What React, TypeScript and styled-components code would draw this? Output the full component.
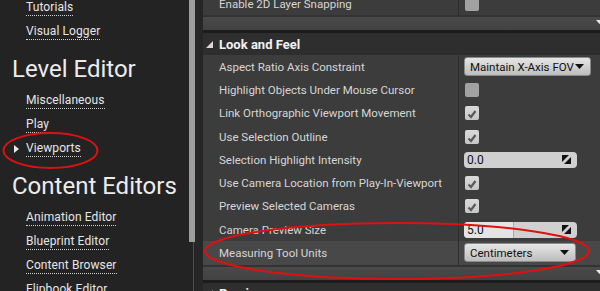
import React from 'react';
import styled, {createGlobalStyle} from 'styled-components';

const GlobalStyle = createGlobalStyle`
    html, body {
        margin: 0;
        padding: 0;
        background: #232323;
    }
    body {
        font-family: Roboto, "Liberation Sans", sans-serif;
    }
`

const navGroups = [
    {title: null, links: ['Tutorials', 'Visual Logger']},
    {title: 'Level Editor', links: ['Miscellaneous', 'Play', 'Viewports']},
    {title: 'Content Editors', links: ['Animation Editor', 'Blueprint Editor', 'Content Browser', 'Flipbook Editor']},
];

type Value =
    | {kind: 'combo'; text: string; width: number}
    | {kind: 'check'; on: boolean}
    | {kind: 'number'; text: string; fill?: number};

const lookAndFeel: {label: string; value: Value; hover?: boolean}[] = [
    {label: 'Aspect Ratio Axis Constraint', value: {kind: 'combo', text: 'Maintain X-Axis FOV', width: 127}},
    {label: 'Highlight Objects Under Mouse Cursor', value: {kind: 'check', on: false}},
    {label: 'Link Orthographic Viewport Movement', value: {kind: 'check', on: true}},
    {label: 'Use Selection Outline', value: {kind: 'check', on: true}},
    {label: 'Selection Highlight Intensity', value: {kind: 'number', text: '0.0'}},
    {label: 'Use Camera Location from Play-In-Viewport', value: {kind: 'check', on: true}},
    {label: 'Preview Selected Cameras', value: {kind: 'check', on: true}},
    {label: 'Camera Preview Size', value: {kind: 'number', text: '5.0', fill: 49}},
    {label: 'Measuring Tool Units', value: {kind: 'combo', text: 'Centimeters', width: 112}, hover: true},
];

const ValueWidget = ({value}: {value: Value}) => {
    if (value.kind === 'check') {
        return (
            <CheckBox $on={value.on}>
                {value.on && (
                    <svg width="14" height="14" viewBox="0 0 14 14">
                        <polyline points="3.5,7.5 6,10 10.5,4" fill="none" stroke="#5a5a5a" strokeWidth="2.2"/>
                    </svg>
                )}
            </CheckBox>
        );
    }
    if (value.kind === 'number') {
        return (
            <NumberBox>
                {value.fill && <SliderFill style={{width: value.fill}}/>}
                <NumberText>{value.text}</NumberText>
                <svg width="9" height="9" viewBox="0 0 9 9">
                    <polygon points="0,0 7,0 0,7" fill="#111"/>
                    <polygon points="9,2 9,9 2,9" fill="#111"/>
                </svg>
            </NumberBox>
        );
    }
    return (
        <Combo style={{width: value.width}}>
            <span>{value.text}</span>
            <svg width="9" height="5" viewBox="0 0 9 5">
                <polygon points="0,0 9,0 4.5,5" fill="#111"/>
            </svg>
        </Combo>
    );
};

const Expander = () => (
    <Band>
        <svg width="7" height="5" viewBox="0 0 7 5">
            <polygon points="0,0 7,0 3.5,4" fill="#e8e8e8"/>
        </svg>
    </Band>
);

export default function App() {
    return (
        <Screen>
            <GlobalStyle/>
            <Sidebar>
                {navGroups.map((group, gi) => (
                    <React.Fragment key={gi}>
                        {group.title && <GroupTitle>{group.title}</GroupTitle>}
                        {group.links.map((link) => (
                            <NavItem key={link}>
                                <Marker>{link === 'Viewports' && <Caret/>}</Marker>
                                <NavLink>{link}</NavLink>
                            </NavItem>
                        ))}
                    </React.Fragment>
                ))}
            </Sidebar>
            <ScrollTrack>
                <ScrollThumb/>
                <ScrollRail/>
            </ScrollTrack>
            <Gutter/>
            <Details>
                <PropertyRow>
                    <PropName>Enable 2D Layer Snapping</PropName>
                    <PropValue><CheckBox $on={false}/></PropValue>
                </PropertyRow>
                <Separator/>
                <Expander/>
                <DarkLine/>
                <CategoryHeader>
                    <svg width="7" height="7" viewBox="0 0 7 7">
                        <polygon points="7,0 7,7 0,7" fill="#d8d8d8"/>
                    </svg>
                    Look and Feel
                </CategoryHeader>
                {lookAndFeel.map((row) => (
                    <PropertyRow key={row.label} $hover={row.hover}>
                        <PropName>{row.label}</PropName>
                        <PropValue><ValueWidget value={row.value}/></PropValue>
                    </PropertyRow>
                ))}
                <Separator/>
                <Expander/>
                <DarkLine/>
                <CategoryHeader>
                    <svg width="7" height="7" viewBox="0 0 7 7">
                        <polygon points="7,0 7,7 0,7" fill="#d8d8d8"/>
                    </svg>
                    Preview
                </CategoryHeader>
            </Details>
            <Annotations width="600" height="291" viewBox="0 0 600 291">
                <ellipse cx="50.5" cy="150.5" rx="47" ry="17.5" fill="none" stroke="#e01010" strokeWidth="2"/>
                <ellipse cx="397" cy="251" rx="192" ry="28" fill="none" stroke="#e01010" strokeWidth="2"/>
            </Annotations>
        </Screen>
    );
}

const Screen = styled.div`
    position: relative;
    display: flex;
    width: 600px;
    height: 291px;
    overflow: hidden;
    background: #232323;
`
const Sidebar = styled.nav`
    width: 189px;
    flex-shrink: 0;
    display: flex;
    flex-direction: column;
    margin-top: -4px;
`
const GroupTitle = styled.div`
    margin: 10px 0 5px;
    padding-left: 12px;
    height: 30px;
    line-height: 30px;
    font-size: 24px;
    color: #ececec;
    white-space: nowrap;
`
const NavItem = styled.div`
    display: flex;
    align-items: center;
    height: 24px;
    flex-shrink: 0;
`
const Marker = styled.div`
    width: 26px;
    display: flex;
    padding-left: 14px;
    box-sizing: border-box;
`
const Caret = styled.div`
    width: 0;
    height: 0;
    border-top: 4px solid transparent;
    border-bottom: 4px solid transparent;
    border-left: 5px solid #e8e8e8;
`
const NavLink = styled.span`
    font-size: 12px;
    line-height: 15px;
    letter-spacing: 0.1px;
    color: #e6e6e6;
    border-bottom: 1px dotted #d0d0d0;
    white-space: nowrap;
`
const ScrollTrack = styled.div`
    width: 6px;
    flex-shrink: 0;
    display: flex;
    flex-direction: column;
`
const ScrollThumb = styled.div`
    height: 242px;
    background: #9d9d9d;
`
const ScrollRail = styled.div`
    flex: 1;
    width: 1px;
    margin-left: 4px;
    background: #4e4e4e;
`
const Gutter = styled.div`
    width: 8px;
    flex-shrink: 0;
    background: #262626;
`
const Details = styled.section`
    flex: 1;
    display: flex;
    flex-direction: column;
    margin-top: -8px;
    background: #3c3c3c;
`
const PropertyRow = styled.div<{$hover?: boolean}>`
    display: grid;
    grid-template-columns: 255px 1fr;
    height: 23.25px;
    flex-shrink: 0;
    background: ${p => p.$hover ? '#484848' : '#3c3c3c'};
`
const PropName = styled.div`
    display: flex;
    align-items: center;
    padding-left: 16px;
    font-size: 11.5px;
    color: #d6d6d6;
    white-space: nowrap;
`
const PropValue = styled.div`
    display: flex;
    align-items: center;
    padding-left: 5px;
    border-left: 1px solid #2d2d2d;
`
const Separator = styled.div`
    height: 2px;
    flex-shrink: 0;
    background: #333;
`
const Band = styled.div`
    height: 13px;
    flex-shrink: 0;
    display: flex;
    justify-content: flex-end;
    align-items: flex-start;
    padding-top: 3px;
    box-sizing: border-box;
    margin-right: -3px;
    background: linear-gradient(#4a4a4a, #424242);
`
const DarkLine = styled.div`
    height: 3px;
    flex-shrink: 0;
    background: #1c1c1c;
`
const CategoryHeader = styled.div`
    display: flex;
    align-items: center;
    gap: 6px;
    height: 22px;
    flex-shrink: 0;
    padding-left: 3px;
    background: #2e2e2e;
    font-size: 13px;
    font-weight: 700;
    color: #f2f2f2;
`
const CheckBox = styled.div<{$on: boolean}>`
    width: 14px;
    height: 14px;
    border-radius: 2px;
    margin-left: 1px;
    background: ${p => p.$on ? 'linear-gradient(#dadada, #c6c6c6)' : '#a2a2a2'};
`
const NumberBox = styled.div`
    position: relative;
    width: 113px;
    height: 16px;
    border-radius: 4px;
    overflow: hidden;
    display: flex;
    align-items: center;
    justify-content: space-between;
    padding: 0 6px 0 3px;
    box-sizing: border-box;
    background: #d0d0d0;
`
const SliderFill = styled.div`
    position: absolute;
    left: 0;
    top: 0;
    bottom: 0;
    background: #e4e4e4;
    border-right: 1px solid #aaa;
`
const NumberText = styled.span`
    position: relative;
    font-size: 12px;
    color: #111;
`
const Combo = styled.div`
    height: 19px;
    box-sizing: border-box;
    display: flex;
    align-items: center;
    justify-content: space-between;
    gap: 1px;
    padding: 0 6px 0 5px;
    border-radius: 3px;
    border: 1px solid #8a8a8a;
    background: linear-gradient(#e6e6e6, #bdbdbd);
    font-size: 11.5px;
    color: #111;
    white-space: nowrap;

    svg {
        flex-shrink: 0;
    }
`
const Annotations = styled.svg`
    position: absolute;
    left: 0;
    top: 0;
    pointer-events: none;
`
